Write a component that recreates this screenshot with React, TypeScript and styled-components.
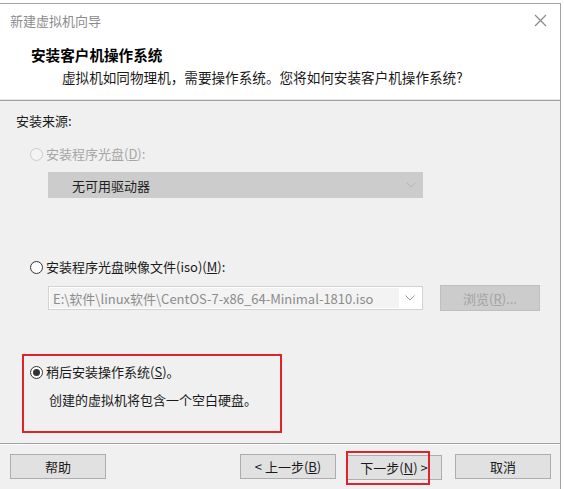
import styled, { createGlobalStyle } from "styled-components";

const GlobalStyle = createGlobalStyle`
  html, body {
    margin: 0;
    padding: 0;
    background: #ffffff;
  }
  body {
    font-family: "Noto Sans CJK SC", "Noto Sans", sans-serif;
    color: #1a1a1a;
  }
`;

const Key = ({ k }: { k: string }) => <u>{k}</u>;

const App = () => {
    return (
        <>
            <GlobalStyle/>
            <Window>
                <TitleBar>
                    <Title>新建虚拟机向导</Title>
                    <CloseButton aria-label="close">
                        <svg width="13" height="13" viewBox="0 0 13 13">
                            <path d="M1 1 L12 12 M12 1 L1 12" stroke="#8a8a8a" strokeWidth="1.2"/>
                        </svg>
                    </CloseButton>
                </TitleBar>
                <Header>
                    <Heading>安装客户机操作系统</Heading>
                    <SubHeading>虚拟机如同物理机，需要操作系统。您将如何安装客户机操作系统?</SubHeading>
                </Header>
                <Body>
                    <SectionLabel>安装来源:</SectionLabel>

                    <RadioRow $disabled $top={13}>
                        <Radio $disabled/>
                        <span>安装程序光盘(<Key k="D"/>):</span>
                    </RadioRow>
                    <FieldRow>
                        <Combo $disabled>
                            <ComboText $disabled>无可用驱动器</ComboText>
                            <Chevron $color="#b4b4b4"/>
                        </Combo>
                    </FieldRow>

                    <RadioRow $top={59}>
                        <Radio/>
                        <span>安装程序光盘映像文件(iso)(<Key k="M"/>):</span>
                    </RadioRow>
                    <FieldRow>
                        <Combo>
                            <ComboText>E:\软件\linux软件\CentOS-7-x86_64-Minimal-1810.iso</ComboText>
                            <Chevron $color="#9a9a9a"/>
                        </Combo>
                        <BrowseButton disabled>浏览(<Key k="R"/>)...</BrowseButton>
                    </FieldRow>

                    <Highlight>
                        <RadioRow $top={0}>
                            <Radio $checked/>
                            <span>稍后安装操作系统(<Key k="S"/>)。</span>
                        </RadioRow>
                        <Note>创建的虚拟机将包含一个空白硬盘。</Note>
                    </Highlight>
                </Body>
                <Footer>
                    <Button>帮助</Button>
                    <Spacer/>
                    <Button>&lt; 上一步(<Key k="B"/>)</Button>
                    <NextWrap>
                        <Button>下一步(<Key k="N"/>) &gt;</Button>
                        <Marker/>
                    </NextWrap>
                    <Button>取消</Button>
                </Footer>
            </Window>
        </>
    );
}

const Chevron = ({ $color }: { $color: string }) => (
    <ChevronBox>
        <svg width="10" height="6" viewBox="0 0 10 6">
            <path d="M0.5 0.5 L5 5 L9.5 0.5" fill="none" stroke={$color} strokeWidth="1"/>
        </svg>
    </ChevronBox>
);

const Window = styled.div`
  margin-top: 3px;
  width: 560px;
  height: 485px;
  border-top: 1px solid #a3a3a3;
  border-right: 1px solid #a3a3a3;
  display: flex;
  flex-direction: column;
  background: #f0f0f0;
  overflow: hidden;
`

const TitleBar = styled.div`
  height: 32px;
  flex: none;
  display: flex;
  align-items: center;
  justify-content: space-between;
  padding: 0 12px 0 10px;
  background: #ffffff;
`

const Title = styled.span`
  font-size: 13px;
  color: #8c8c8c;
`

const CloseButton = styled.div`
  width: 16px;
  height: 16px;
  display: flex;
  align-items: center;
  justify-content: center;
`

const Header = styled.div`
  flex: none;
  height: 55px;
  padding: 9px 0 0 31px;
  background: #ffffff;
  border-bottom: 1px solid #a0a0a0;
  box-shadow: inset 0 -1px 0 #e6e6e6;
`

const Heading = styled.div`
  font-size: 14.6px;
  font-weight: 700;
  line-height: 20px;
  color: #000;
`

const SubHeading = styled.div`
  font-size: 13.6px;
  line-height: 20px;
  margin-top: 2px;
  padding-left: 31px;
  color: #1a1a1a;
`

const Body = styled.div`
  flex: none;
  height: 332px;
  padding: 10px 0 0 16px;
  display: flex;
  flex-direction: column;
  align-items: flex-start;
  font-size: 13px;
`

const SectionLabel = styled.div`
  line-height: 20px;
`

const RadioRow = styled.div<{ $disabled?: boolean; $top: number }>`
  display: flex;
  align-items: center;
  gap: 3px;
  margin: ${p => p.$top}px 0 0 14px;
  line-height: 20px;
  color: ${p => (p.$disabled ? "#a6a6a6" : "#1a1a1a")};
`

const Radio = styled.span<{ $disabled?: boolean; $checked?: boolean }>`
  width: 13px;
  height: 13px;
  box-sizing: border-box;
  border-radius: 50%;
  border: 1px solid ${p => (p.$disabled ? "#cccccc" : "#333333")};
  background: ${p => (p.$disabled ? "#f4f4f4" : "#ffffff")};
  display: flex;
  align-items: center;
  justify-content: center;

  &::after {
    content: "";
    display: ${p => (p.$checked ? "block" : "none")};
    width: 7px;
    height: 7px;
    border-radius: 50%;
    background: #333333;
  }
`

const FieldRow = styled.div`
  display: flex;
  align-items: center;
  gap: 17px;
  margin: 8px 0 0 32px;
`

const Combo = styled.div<{ $disabled?: boolean }>`
  width: 375px;
  height: ${p => (p.$disabled ? 26 : 24)}px;
  box-sizing: border-box;
  display: flex;
  align-items: stretch;
  border: 1px solid ${p => (p.$disabled ? "#cccccc" : "#d2d2d2")};
  background: ${p => (p.$disabled ? "#cccccc" : "#ffffff")};
  padding: ${p => (p.$disabled ? "0" : "1px")};
`

const ComboText = styled.span<{ $disabled?: boolean }>`
  flex: 1;
  display: flex;
  align-items: center;
  padding-left: ${p => (p.$disabled ? 23 : 3)}px;
  font-size: 13px;
  white-space: nowrap;
  overflow: hidden;
  color: ${p => (p.$disabled ? "#1f1f1f" : "#8c8c8c")};
  background: ${p => (p.$disabled ? "transparent" : "#f3f3f3")};
`

const ChevronBox = styled.span`
  width: 22px;
  display: flex;
  align-items: center;
  justify-content: center;
`

const BrowseButton = styled.button`
  width: 100px;
  height: 26px;
  border: 1px solid #bfbfbf;
  background: #cccccc;
  color: #a3a3a3;
  font-family: inherit;
  font-size: 13px;
  padding: 0;
`

const Highlight = styled.div`
  width: 260px;
  box-sizing: border-box;
  margin: 43px 0 0 6px;
  border: 2px solid #e0222b;
  padding: 6px 0 21px 0;

  ${RadioRow} {
    margin-left: 6px;
  }
`

const Note = styled.div`
  margin: 8px 0 0 25px;
  line-height: 20px;
`

const Footer = styled.div`
  flex: 1;
  display: flex;
  align-items: flex-start;
  padding: 10px 9px 0 10px;
  border-top: 1px solid #a0a0a0;
  box-shadow: inset 0 1px 0 #ffffff;
`

const Spacer = styled.div`
  flex: 1;
`

const Button = styled.button`
  width: 96px;
  height: 25px;
  padding: 0;
  border: 1px solid #adadad;
  background: #e1e1e1;
  font-family: inherit;
  font-size: 13px;
  color: #1a1a1a;

  & + & {
    margin-left: 10px;
  }
`

const NextWrap = styled.div`
  position: relative;
  margin: 0 13px 0 10px;
`

const Marker = styled.div`
  position: absolute;
  left: 0;
  top: -3px;
  width: 84px;
  height: 34px;
  box-sizing: border-box;
  border: 2px solid #e0222b;
  pointer-events: none;
`

export default App
